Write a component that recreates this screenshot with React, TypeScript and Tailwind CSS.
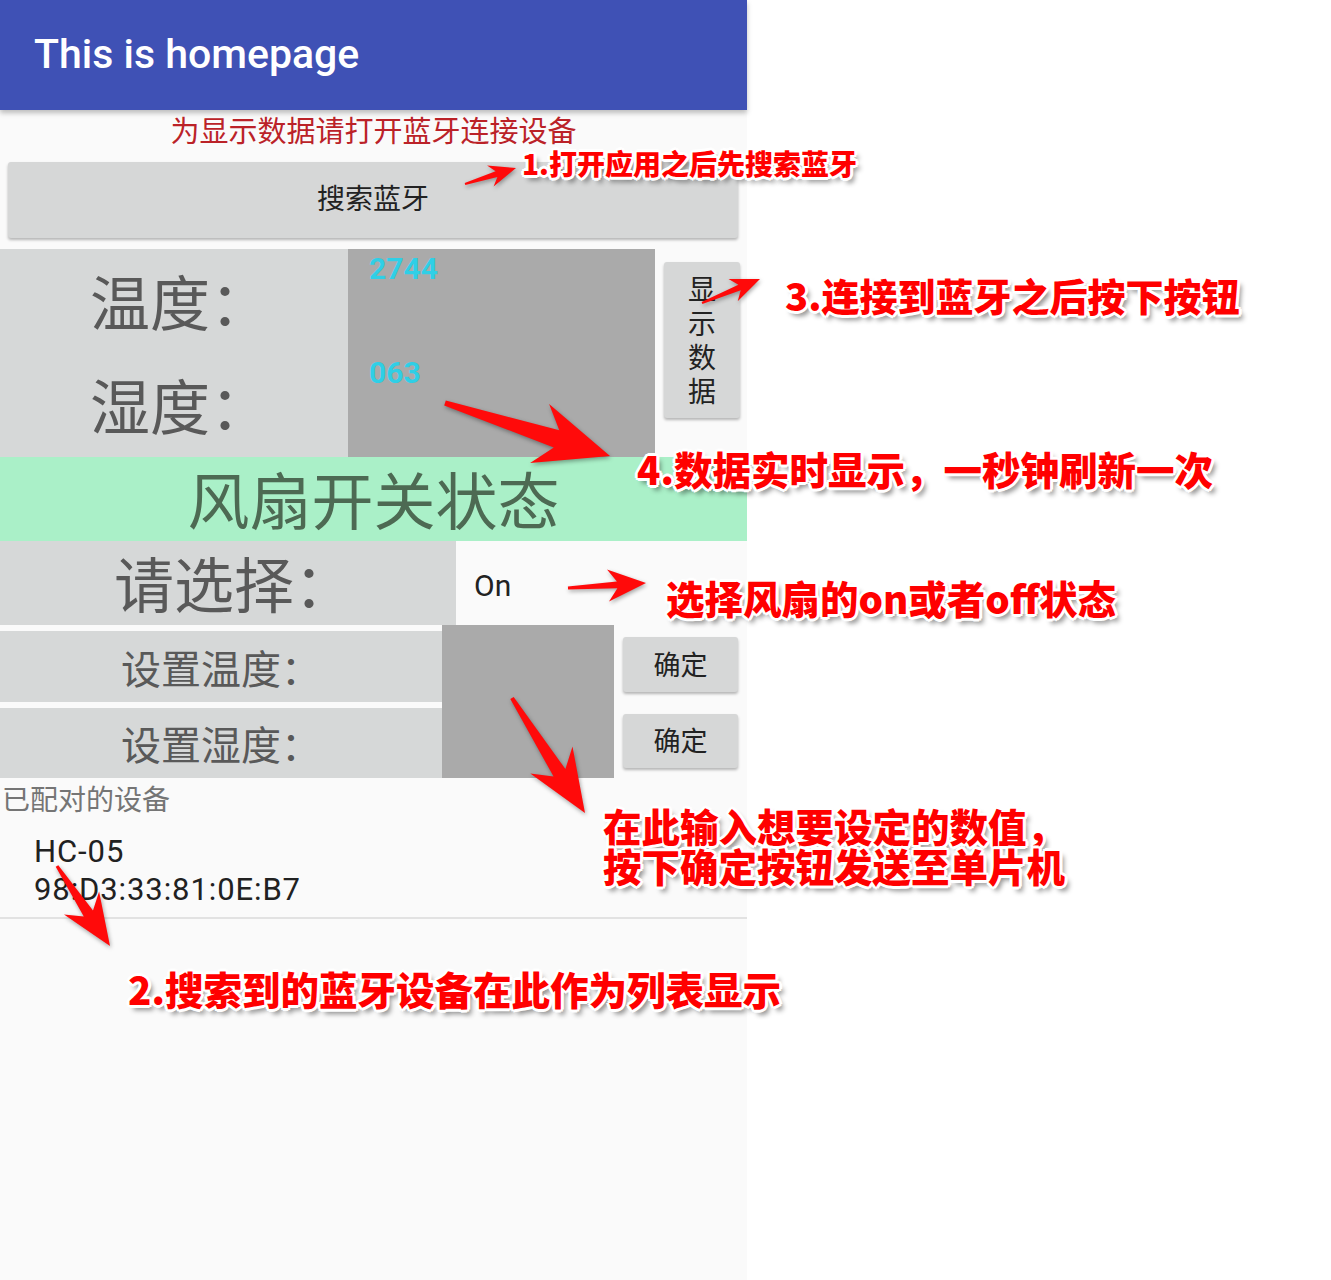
const appFont = "font-['Roboto','Noto_Sans_CJK_SC',sans-serif]";

const noteClass =
  "absolute whitespace-nowrap font-['Noto_Sans_CJK_SC','Noto_Sans',sans-serif] font-black text-[#ff0000] [text-shadow:0_0_2px_#fff,2px_2px_0_#fff,-2px_-2px_0_#fff,2px_-2px_0_#fff,-2px_2px_0_#fff,3px_0_0_#fff,-3px_0_0_#fff,0_3px_0_#fff,0_-3px_0_#fff,4px_5px_5px_rgba(0,0,0,0.45)]";

type Arrow = {
  from: [number, number];
  to: [number, number];
  head: number;
  wing: number;
  shaft: number;
  tail: number;
};

const arrows: Arrow[] = [
  { from: [465, 184], to: [516, 168], head: 24, wing: 22, shaft: 6, tail: 2 },
  { from: [702, 303], to: [760, 279], head: 26, wing: 24, shaft: 6, tail: 2 },
  { from: [445, 403], to: [610, 456], head: 66, wing: 62, shaft: 18, tail: 5 },
  { from: [568, 588], to: [646, 583], head: 34, wing: 32, shaft: 7, tail: 3 },
  { from: [512, 698], to: [585, 813], head: 56, wing: 50, shaft: 14, tail: 4 },
  { from: [57, 866], to: [110, 946], head: 46, wing: 42, shaft: 11, tail: 3 },
];

const arrowPoints = ({ from, to, head, wing, shaft, tail }: Arrow) => {
  const [x1, y1] = from;
  const [x2, y2] = to;
  const len = Math.hypot(x2 - x1, y2 - y1);
  const ux = (x2 - x1) / len;
  const uy = (y2 - y1) / len;
  const nx = -uy;
  const ny = ux;
  const bx = x2 - ux * head;
  const by = y2 - uy * head;
  const neck = (s: number) => [bx + ux * head * 0.15 + nx * s * shaft / 2, by + uy * head * 0.15 + ny * s * shaft / 2];
  const wingPt = (s: number) => [bx - ux * head * 0.12 + nx * s * wing / 2, by - uy * head * 0.12 + ny * s * wing / 2];
  const pts = [
    [x1 + nx * tail / 2, y1 + ny * tail / 2],
    neck(1),
    wingPt(1),
    [x2, y2],
    wingPt(-1),
    neck(-1),
    [x1 - nx * tail / 2, y1 - ny * tail / 2],
  ];
  return pts.map(([x, y]) => `${x.toFixed(1)},${y.toFixed(1)}`).join(' ');
}

const Label = ({ text, className }: { text: string; className: string }) => {
  return (
    <div className={`flex items-center justify-center bg-[#d6d8d8] text-[#595959] ${className}`}>
      {text}
    </div>
  );
}

const App = () => {
  return (
    <div className={`relative h-[1280px] w-[1331px] overflow-hidden bg-white ${appFont}`}>
      <div className="flex h-full w-[747px] flex-col bg-[#fafafa]">
        <header className="relative z-10 flex h-[110px] shrink-0 items-center bg-[#3f51b5] pl-[34px] shadow-[0_3px_5px_rgba(0,0,0,0.25)]">
          <h1 className="text-[41px] font-medium text-white">This is homepage</h1>
        </header>

        <p className="h-[52px] pt-[2px] text-center text-[29px] leading-[40px] text-[#bb2228]">
          为显示数据请打开蓝牙连接设备
        </p>

        <div className="px-[8px]">
          <button
            type="button"
            className="flex h-[76px] w-[730px] items-center justify-center rounded-[3px] bg-[#d6d7d7] text-[28px] text-[#222] shadow-[0_2px_3px_rgba(0,0,0,0.28)]"
          >
            搜索蓝牙
          </button>
        </div>

        <div className="mt-[11px] flex h-[208px]">
          <div className="flex w-[348px] flex-col">
            <Label text="温度：" className="h-[104px] pl-[12px] pt-[10px] text-[60px]" />
            <Label text="湿度：" className="h-[104px] pl-[12px] pt-[10px] text-[60px]" />
          </div>
          <div className="flex w-[307px] flex-col bg-[#aaaaaa] pl-[21px] text-[30px] font-bold leading-[34px] text-[#2fcfe6]">
            <div className="h-[104px] pt-[3px]">2744</div>
            <div className="h-[104px] pt-[3px]">063</div>
          </div>
          <div className="pl-[9px] pt-[13px]">
            <button
              type="button"
              className="flex h-[156px] w-[76px] flex-col items-center justify-center rounded-[3px] bg-[#d6d7d7] pt-[4px] text-[28px] leading-[34px] text-[#222] shadow-[0_2px_3px_rgba(0,0,0,0.28)]"
            >
              {'显示数据'.split('').map((c) => (
                <span key={c}>{c}</span>
              ))}
            </button>
          </div>
        </div>

        <div className="flex h-[84px] items-center justify-center bg-[#aaf0c8] pt-[8px] text-[62px] text-[#4d6a53]">
          风扇开关状态
        </div>

        <div className="flex h-[84px]">
          <Label text="请选择：" className="w-[456px] pl-[12px] pt-[10px] text-[60px]" />
          <div className="flex items-center pl-[18px] pt-[4px] text-[30px] text-[#222]">On</div>
        </div>

        <div className="flex h-[153px]">
          <div className="flex w-[442px] flex-col gap-[6px] pt-[6px]">
            <Label text="设置温度：" className="h-[71px] pt-[8px] text-[40px]" />
            <Label text="设置湿度：" className="h-[70px] pt-[8px] text-[40px]" />
          </div>
          <div className="w-[172px] bg-[#aaaaaa]" />
          <div className="flex flex-col gap-[22px] pl-[9px] pt-[12px]">
            <button
              type="button"
              className="h-[55px] w-[115px] rounded-[3px] bg-[#d6d7d7] pt-[3px] text-[27px] text-[#222] shadow-[0_2px_3px_rgba(0,0,0,0.28)]"
            >
              确定
            </button>
            <button
              type="button"
              className="h-[54px] w-[115px] rounded-[3px] bg-[#d6d7d7] pt-[3px] text-[27px] text-[#222] shadow-[0_2px_3px_rgba(0,0,0,0.28)]"
            >
              确定
            </button>
          </div>
        </div>

        <p className="h-[40px] pl-[2px] pt-[3px] text-[28px] leading-[40px] text-[#757575]">已配对的设备</p>

        <div className="pb-[8px] pl-[34px] pt-[15px] text-[31px] leading-[38px] tracking-[0.9px] text-[#212121]">
          <div>HC-05</div>
          <div>98:D3:33:81:0E:B7</div>
        </div>
        <div className="h-[2px] bg-[#e2e2e2]" />
      </div>

      <svg
        className="pointer-events-none absolute inset-0 drop-shadow-[1px_2px_2px_rgba(0,0,0,0.35)]"
        width="1331"
        height="1280"
        viewBox="0 0 1331 1280"
      >
        {arrows.map((a, i) => (
          <polygon key={i} points={arrowPoints(a)} fill="#ff0a0a" />
        ))}
      </svg>

      <div className={`${noteClass} left-[522px] top-[149px] text-[28px] leading-[28px]`}>1.打开应用之后先搜索蓝牙</div>
      <div className={`${noteClass} left-[785px] top-[276px] text-[38px] leading-[38px]`}>3.连接到蓝牙之后按下按钮</div>
      <div className={`${noteClass} left-[637px] top-[449px] text-[38.5px] leading-[38px]`}>4.数据实时显示，一秒钟刷新一次</div>
      <div className={`${noteClass} left-[666px] top-[578px] text-[38.5px] leading-[38px]`}>选择风扇的on或者off状态</div>
      <div className={`${noteClass} left-[603px] top-[805px] text-[38.5px] leading-[40px]`}>
        <div>在此输入想要设定的数值，</div>
        <div>按下确定按钮发送至单片机</div>
      </div>
      <div className={`${noteClass} left-[128px] top-[969px] text-[38.5px] leading-[38px]`}>2.搜索到的蓝牙设备在此作为列表显示</div>
    </div>
  );
}

export default App;
